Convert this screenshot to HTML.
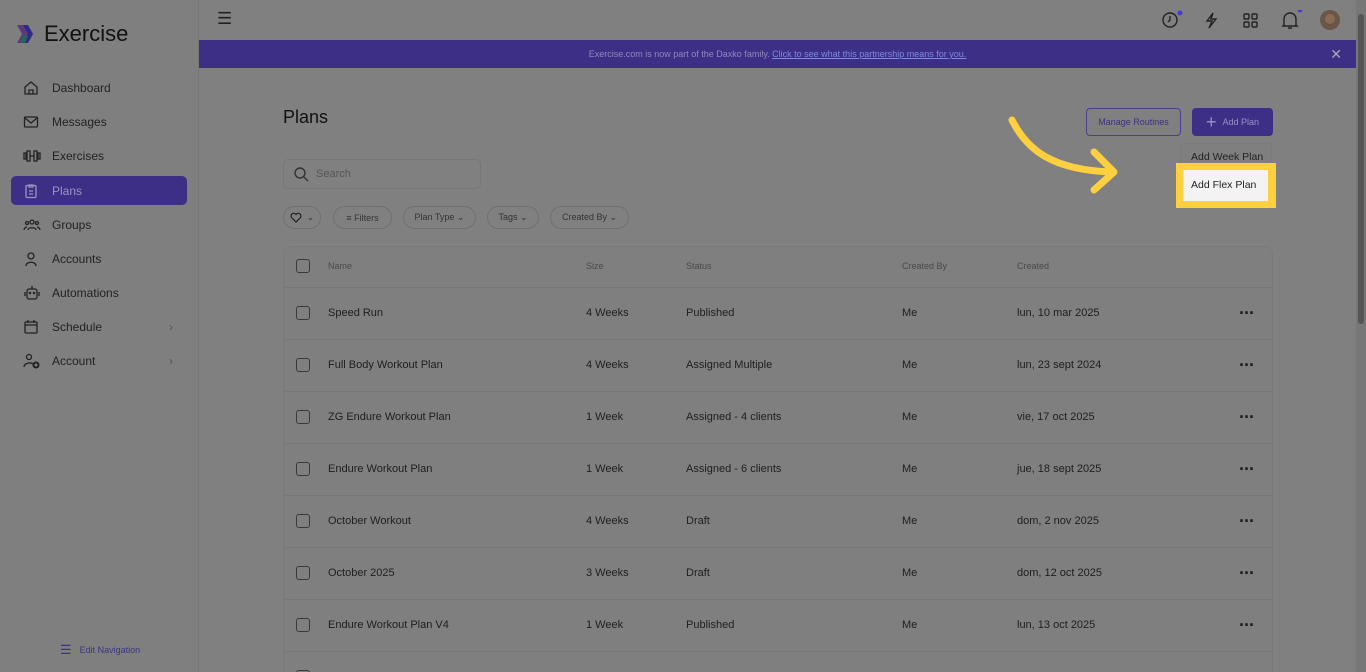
<!DOCTYPE html>
<html style="width:1366px;height:672px;overflow:hidden"><head><meta charset="utf-8"><style>
*{box-sizing:border-box;margin:0;padding:0}
body{width:1366px;height:672px;overflow:hidden;background:#808080;font-family:"Liberation Sans",sans-serif;color:#1a1a1a;position:relative}
.side{position:absolute;left:0;top:0;width:199px;height:672px;background:#7f7f7f;border-right:1px solid #777}
.logo{position:absolute;left:14px;top:21px;display:flex;align-items:center;gap:8px;font-size:22px;color:#111}
.nav{position:absolute;left:11px;width:176px;height:29px;display:flex;align-items:center;font-size:12px;color:#222;border-radius:5px}
.nav svg{position:absolute;left:12px}
.nav span{position:absolute;left:41px}
.nav.act{background:#3d2f86;color:#9a93bf}
.chev{position:absolute;right:14px;color:#555;font-size:12px;font-weight:normal}
.banner{position:absolute;left:199px;top:40px;width:1157px;height:28px;background:#3d2f86;color:#8f89ba;font-size:9px;text-align:center;line-height:28px}
.banner u{color:#7a8be0}
.sb{position:absolute;right:0;top:0;width:10px;height:672px;background:#777}
.sb i{position:absolute;left:2px;top:14px;width:6px;height:310px;background:#555;border-radius:3px}
h1{position:absolute;left:283px;top:107px;font-size:18px;font-weight:normal;color:#111}
.btn{position:absolute;top:108px;height:28px;border-radius:4px;font-size:9px;display:flex;align-items:center;justify-content:center}
.search{position:absolute;left:283px;top:159px;width:198px;height:30px;border:1px solid #777;border-radius:5px;font-size:11px;color:#555;line-height:28px;padding-left:32px}
.pill{position:absolute;top:206px;height:23px;border:1px solid #6f6f6f;border-radius:12px;font-size:9px;color:#333;display:flex;align-items:center;justify-content:center;gap:5px}
.tbl{position:absolute;left:283px;top:246px;width:990px;height:440px;border:1px solid #7a7a7a;border-radius:8px;background:#7f7f7f}
.row{position:absolute;left:0;width:988px;height:52px;border-top:1px solid #777;font-size:11px;color:#1e1e1e}
.row div{position:absolute;top:19px}
.row .d{left:955px;top:15px;font-size:18px;font-weight:bold;letter-spacing:-1px}
.cb{position:absolute;left:12px;width:14px;height:14px;border:1.5px solid #3a3a3a;border-radius:3px}
.hd{color:#4a4a4a;font-size:9px}
</style></head><body>
<div class="side">
 <div class="logo"><svg width="22" height="22" viewBox="0 0 22 22"><path d="M3 2h7l5 9-5 9H3l5-9z" fill="#5a3c7a"/><path d="M9 2h5l5 9-5 9H9l5-9z" fill="#2f2a8a"/><path d="M9 13h5l-3 7H7z" fill="#1f6a4a"/></svg>Exercise</div>
 <div class="nav" style="top:73px"><svg width="16" height="16" viewBox="0 0 16 16" fill="none" stroke="#222" stroke-width="1.3"><path d="M2 7l6-5 6 5v7H2zM6 14v-4h4v4"/></svg><span>Dashboard</span></div>
 <div class="nav" style="top:107px"><svg width="16" height="16" viewBox="0 0 16 16" fill="none" stroke="#222" stroke-width="1.3"><rect x="1.5" y="3" width="13" height="10" rx="1"/><path d="M2 4l6 5 6-5"/></svg><span>Messages</span></div>
 <div class="nav" style="top:141px"><svg width="18" height="16" viewBox="0 0 18 16" fill="none" stroke="#222" stroke-width="1.3"><rect x="1" y="5" width="2" height="6"/><rect x="4" y="3" width="3" height="10"/><rect x="11" y="3" width="3" height="10"/><rect x="15" y="5" width="2" height="6"/><path d="M7 8h4"/></svg><span>Exercises</span></div>
 <div class="nav act" style="top:176px"><svg width="16" height="16" viewBox="0 0 16 16" fill="none" stroke="#9a93bf" stroke-width="1.3"><rect x="3" y="2.5" width="10" height="12" rx="1"/><path d="M6 2h4v2H6zM6 8h4M6 11h4"/></svg><span>Plans</span></div>
 <div class="nav" style="top:210px"><svg width="18" height="16" viewBox="0 0 18 16" fill="none" stroke="#222" stroke-width="1.3"><circle cx="9" cy="5" r="2"/><circle cx="4" cy="6" r="1.5"/><circle cx="14" cy="6" r="1.5"/><path d="M5 13c0-3 8-3 8 0M1 13c0-2 2-3 3-3M17 13c0-2-2-3-3-3"/></svg><span>Groups</span></div>
 <div class="nav" style="top:244px"><svg width="16" height="16" viewBox="0 0 16 16" fill="none" stroke="#222" stroke-width="1.3"><circle cx="8" cy="5" r="3"/><path d="M3 15c0-5 10-5 10 0"/></svg><span>Accounts</span></div>
 <div class="nav" style="top:278px"><svg width="18" height="16" viewBox="0 0 18 16" fill="none" stroke="#222" stroke-width="1.3"><rect x="4" y="4" width="10" height="10" rx="2"/><path d="M9 1v3M2 7v4M16 7v4"/><circle cx="7" cy="8" r=".6"/><circle cx="11" cy="8" r=".6"/></svg><span>Automations</span></div>
 <div class="nav" style="top:312px"><svg width="16" height="16" viewBox="0 0 16 16" fill="none" stroke="#222" stroke-width="1.3"><rect x="2" y="3" width="12" height="11" rx="1"/><path d="M2 6h12M5 1v3M11 1v3"/></svg><span>Schedule</span><b class="chev">›</b></div>
 <div class="nav" style="top:346px"><svg width="18" height="16" viewBox="0 0 18 16" fill="none" stroke="#222" stroke-width="1.3"><circle cx="6" cy="4" r="2.5"/><path d="M1 14c0-4 7-5 9-3"/><circle cx="13" cy="12" r="2.5" stroke-width="2"/></svg><span>Account</span><b class="chev">›</b></div>
 <div style="position:absolute;left:60px;top:642px;font-size:9px;color:#3a3580;display:flex;gap:8px;align-items:center"><span style="font-size:13px">☰</span>Edit Navigation</div>
</div>
<div style="position:absolute;left:217px;top:9px;font-size:17px;color:#222">☰</div>
<svg style="position:absolute;left:1160px;top:10px" width="190" height="22" viewBox="0 0 190 22" fill="none" stroke="#222" stroke-width="1.4">
<circle cx="10" cy="10" r="7"/><path d="M10 6v4l-2 2"/><circle cx="20" cy="3" r="2.5" fill="#4a3ad0" stroke="none"/>
<path d="M53 3l-6 8h5l-3 7 7-9h-5z"/>
<rect x="84" y="4" width="5" height="5" rx="1"/><rect x="92" y="4" width="5" height="5" rx="1"/><rect x="84" y="12" width="5" height="5" rx="1"/><rect x="92" y="12" width="5" height="5" rx="1"/>
<path d="M124 15V9a6 6 0 0112 0v6l1 1h-14zM128 18h4"/><circle cx="140" cy="0" r="2.5" fill="#4a3ad0" stroke="none"/>
<circle cx="170" cy="10" r="10" fill="#6b5547" stroke="none"/><circle cx="170" cy="9" r="5" fill="#8a6a52" stroke="none"/>
</svg>
<div class="banner">Exercise.com is now part of the Daxko family. <u>Click to see what this partnership means for you.</u><span style="position:absolute;right:14px;font-size:14px;color:#aaa">✕</span></div>
<div class="sb"><i></i></div>
<h1>Plans</h1>
<div class="btn" style="left:1086px;width:95px;border:1px solid #4a3f8f;color:#3a3180">Manage Routines</div>
<div class="btn" style="left:1192px;width:81px;background:#3d2f86;color:#9a93bf;gap:6px"><span style="font-size:18px;font-weight:300">+</span>Add Plan</div>
<div style="position:absolute;left:1180px;top:143px;width:92px;height:60px;border-radius:4px;background:#7f7f7f;border:1px solid #7a7a7a"></div>
<div style="position:absolute;left:1191px;top:151px;font-size:10.5px;color:#222">Add Week Plan</div>
<div style="position:absolute;left:1176px;top:163px;width:100px;height:45px;background:#fecf3f"></div>
<div style="position:absolute;left:1183px;top:170px;width:85px;height:31px;background:#f3f3f3;font-size:10.5px;color:#222;line-height:31px;padding-left:8px">Add Flex Plan</div>
<svg style="position:absolute;left:1000px;top:110px" width="125" height="90" viewBox="0 0 125 90" fill="none" stroke="#fecf3f" stroke-width="7" stroke-linecap="round" stroke-linejoin="round"><path d="M12 10c15 30 40 50 100 52"/><path d="M94 42l20 20-20 18"/></svg>
<div class="search"><svg style="position:absolute;left:10px;top:7px" width="15" height="15" viewBox="0 0 15 15" fill="none" stroke="#333" stroke-width="1.4"><circle cx="6" cy="6" r="5"/><path d="M10 10l4 4"/></svg>Search</div>
<div class="pill" style="left:283px;width:38px"><svg width="12" height="11" viewBox="0 0 12 11" fill="none" stroke="#222" stroke-width="1.2"><path d="M6 10L1.5 5.5a2.5 2.5 0 014.5-3 2.5 2.5 0 014.5 3z"/></svg>⌄</div>
<div class="pill" style="left:333px;width:59px">≡ Filters</div>
<div class="pill" style="left:403px;width:73px">Plan Type ⌄</div>
<div class="pill" style="left:487px;width:52px">Tags ⌄</div>
<div class="pill" style="left:550px;width:79px">Created By ⌄</div>
<div class="tbl">
 <div class="row hd" style="top:0;height:40px;border-top:none"><span class="cb" style="top:12px"></span><div style="left:44px;top:14px">Name</div><div style="left:302px;top:14px">Size</div><div style="left:402px;top:14px">Status</div><div style="left:618px;top:14px">Created By</div><div style="left:733px;top:14px">Created</div></div>
 <div class="row" style="top:40px"><span class="cb" style="top:18px"></span><div style="left:44px">Speed Run</div><div style="left:302px">4 Weeks</div><div style="left:402px">Published</div><div style="left:618px">Me</div><div style="left:733px">lun, 10 mar 2025</div><div class="d">···</div></div>
 <div class="row" style="top:92px"><span class="cb" style="top:18px"></span><div style="left:44px">Full Body Workout Plan</div><div style="left:302px">4 Weeks</div><div style="left:402px">Assigned Multiple</div><div style="left:618px">Me</div><div style="left:733px">lun, 23 sept 2024</div><div class="d">···</div></div>
 <div class="row" style="top:144px"><span class="cb" style="top:18px"></span><div style="left:44px">ZG Endure Workout Plan</div><div style="left:302px">1 Week</div><div style="left:402px">Assigned - 4 clients</div><div style="left:618px">Me</div><div style="left:733px">vie, 17 oct 2025</div><div class="d">···</div></div>
 <div class="row" style="top:196px"><span class="cb" style="top:18px"></span><div style="left:44px">Endure Workout Plan</div><div style="left:302px">1 Week</div><div style="left:402px">Assigned - 6 clients</div><div style="left:618px">Me</div><div style="left:733px">jue, 18 sept 2025</div><div class="d">···</div></div>
 <div class="row" style="top:248px"><span class="cb" style="top:18px"></span><div style="left:44px">October Workout</div><div style="left:302px">4 Weeks</div><div style="left:402px">Draft</div><div style="left:618px">Me</div><div style="left:733px">dom, 2 nov 2025</div><div class="d">···</div></div>
 <div class="row" style="top:300px"><span class="cb" style="top:18px"></span><div style="left:44px">October 2025</div><div style="left:302px">3 Weeks</div><div style="left:402px">Draft</div><div style="left:618px">Me</div><div style="left:733px">dom, 12 oct 2025</div><div class="d">···</div></div>
 <div class="row" style="top:352px"><span class="cb" style="top:18px"></span><div style="left:44px">Endure Workout Plan V4</div><div style="left:302px">1 Week</div><div style="left:402px">Published</div><div style="left:618px">Me</div><div style="left:733px">lun, 13 oct 2025</div><div class="d">···</div></div>
 <div class="row" style="top:404px"><span class="cb" style="top:18px"></span></div>
</div>
</body></html>
